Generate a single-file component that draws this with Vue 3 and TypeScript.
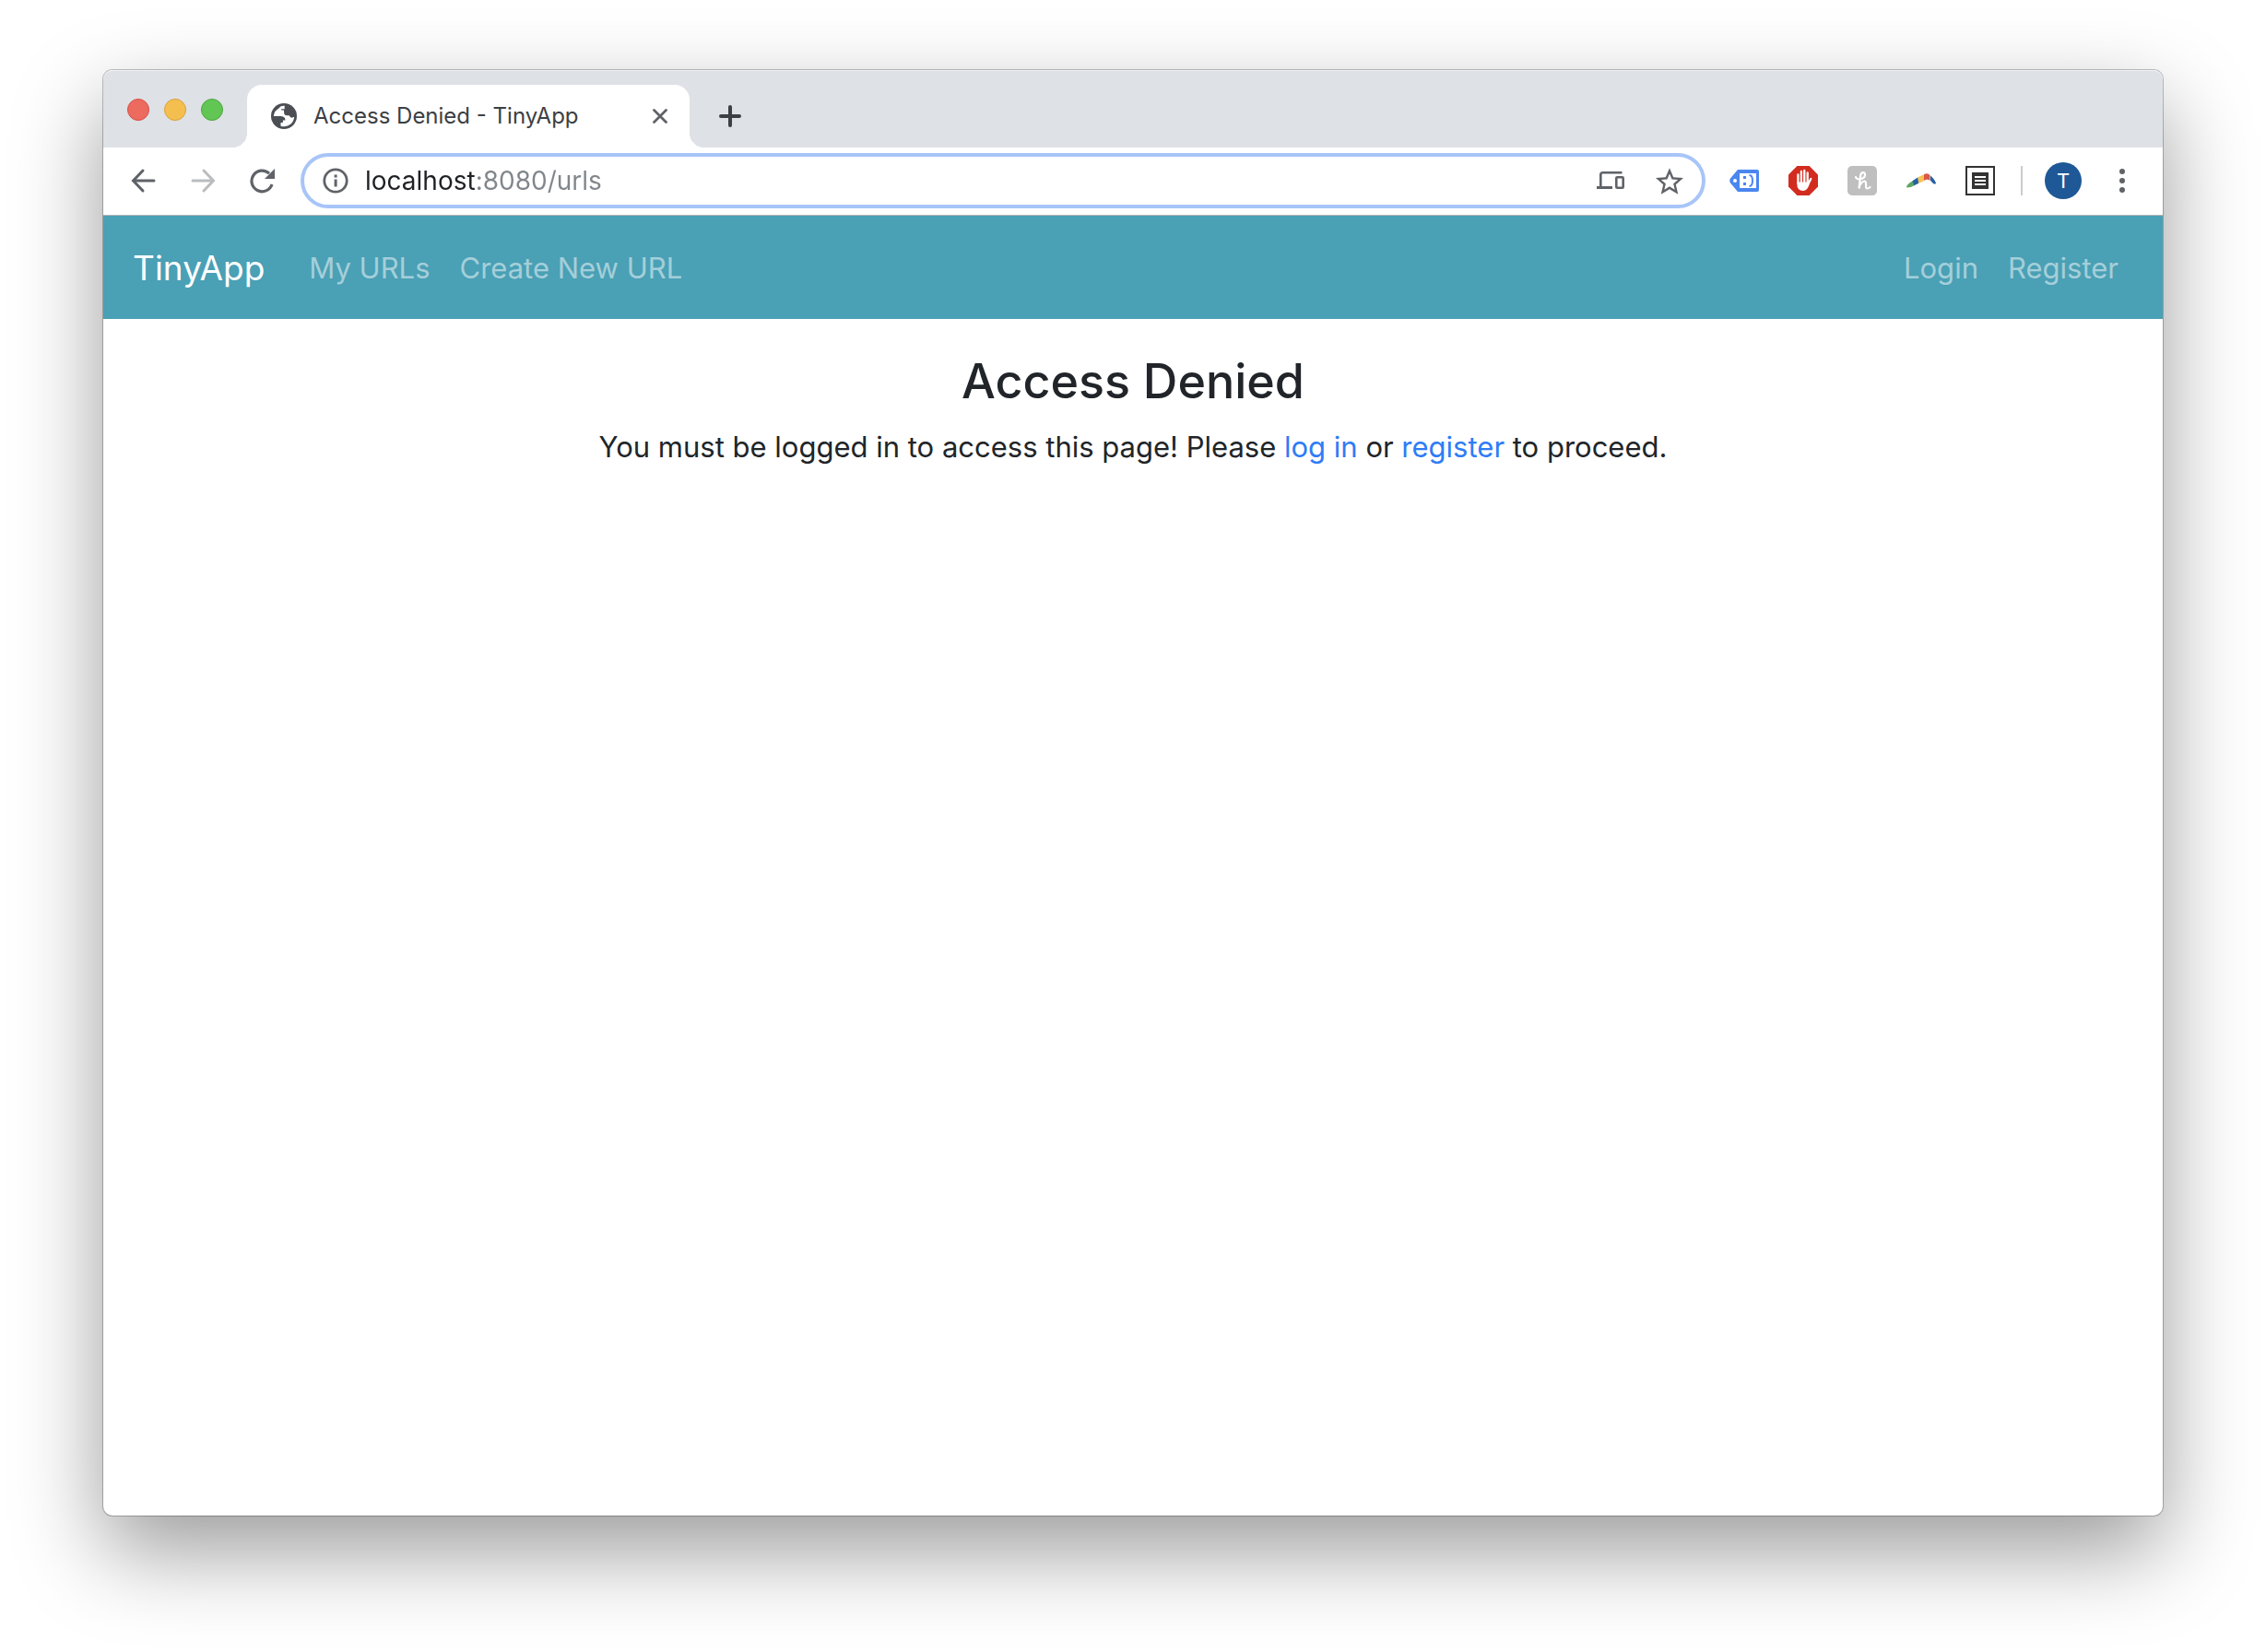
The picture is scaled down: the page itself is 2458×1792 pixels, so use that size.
<script setup lang="ts">
import { ref } from 'vue'

interface NavLink {
  label: string
  href: string
}

const address = ref('localhost:8080/urls')

const mainLinks: NavLink[] = [
  { label: 'My URLs', href: '#urls' },
  { label: 'Create New URL', href: '#new' },
]

const accountLinks: NavLink[] = [
  { label: 'Login', href: '#login' },
  { label: 'Register', href: '#register' },
]
</script>

<template>
  <div class="desktop">
    <div class="window">
      <div class="tab-strip">
        <div class="lights">
          <button class="light red" aria-label="Close window"></button>
          <button class="light yellow" aria-label="Minimize window"></button>
          <button class="light green" aria-label="Zoom window"></button>
        </div>
        <div class="tab">
          <svg width="28" height="28" viewBox="2 2 20 20" aria-hidden="true">
            <circle cx="12" cy="12" r="10" fill="#4b4f54" />
            <path
              d="M12 4c-1 0-2.100.2-3 .6v.4l-3.600 3A8 8 0 0 0 4 12h5.200c2.200 0 3.800 1 3.800 2.600v.6h-1.800v1.800H9.500v2.600A8 8 0 0 0 20 12.600c-1 .6-2.200.8-3 .2l-1-1.300h-1.700c-1.400 0-2.200-.8-2.200-2.200l-.2-1.900H10V6.500h2.500V4z"
              fill="#fff"
            />
          </svg>
          <span class="tab-title">Access Denied - TinyApp</span>
          <button class="tab-close" aria-label="Close tab">
            <svg width="16" height="16" viewBox="0 0 16 16">
              <path d="M1.500 1.500l13 13M14.500 1.500l-13 13" stroke="#5f6368" stroke-width="2.800" stroke-linecap="round" />
            </svg>
          </button>
        </div>
        <button class="new-tab" aria-label="New tab">
          <svg width="24" height="24" viewBox="0 0 24 24">
            <path d="M12 2v20M2 12h20" stroke="#3c4043" stroke-width="4" stroke-linecap="round" />
          </svg>
        </button>
      </div>

      <div class="toolbar">
        <button class="tool" aria-label="Back">
          <svg width="28" height="28" viewBox="0 0 28 28" fill="none" stroke="#5f6368" stroke-width="3" stroke-linecap="round">
            <path d="M25 14H3M13 3L2.500 14 13 25" />
          </svg>
        </button>
        <button class="tool" aria-label="Forward" disabled>
          <svg width="28" height="28" viewBox="0 0 28 28" fill="none" stroke="#babcbe" stroke-width="3" stroke-linecap="round">
            <path d="M3 14h22M15 3l10.500 11L15 25" />
          </svg>
        </button>
        <button class="tool" aria-label="Reload">
          <svg width="28" height="28" viewBox="0 0 28 28">
            <path d="M25 18A11.300 11.300 0 1 1 22 6.200" fill="none" stroke="#5f6368" stroke-width="3.200" />
            <path d="M28 1v11H17z" fill="#5f6368" />
          </svg>
        </button>

        <div class="omnibox">
          <button class="info" aria-label="Site information">
            <svg width="28" height="28" viewBox="0 0 28 28">
              <circle cx="14" cy="14" r="12.200" fill="none" stroke="#5f6368" stroke-width="2.800" />
              <path d="M12.600 12.600h3v8h-3zM12.600 7.600h3v3h-3z" fill="#5f6368" />
            </svg>
          </button>
          <input v-model="address" class="address" type="text" aria-label="Address" spellcheck="false" />
          <button class="omni-btn" aria-label="Send to your devices">
            <svg width="30" height="20" viewBox="0 0 30 20" fill="none" stroke="#5f6368">
              <path d="M27.500 1.300H6.300a2 2 0 0 0-2 2V16" stroke-width="2.600" />
              <path d="M0 17.500h17" stroke-width="3" />
              <rect x="21.300" y="6.300" width="7.400" height="11.400" rx="1" stroke-width="2.600" />
            </svg>
          </button>
          <button class="omni-btn" aria-label="Bookmark this page">
            <svg width="30" height="29" viewBox="2 2 20 19" fill="#5f6368">
              <path
                d="M22 9.240l-7.190-.62L12 2 9.190 8.630 2 9.240l5.460 4.730L5.820 21 12 17.270 18.180 21l-1.630-7.030L22 9.240zM12 15.400l-3.760 2.270 1-4.280-3.320-2.880 4.380-.38L12 6.100l1.710 4.040 4.380.38-3.320 2.880 1 4.280L12 15.400z"
              />
            </svg>
          </button>
        </div>

        <div class="extensions">
          <button class="tool" aria-label="Tag assistant">
            <svg width="32" height="24" viewBox="0 0 32 24">
              <path d="M9 0h21q2 0 2 2v20q0 2-2 2H9L1 14.500q-1.500-2.500 0-5z" fill="#4a86f0" />
              <circle cx="6" cy="12" r="2" fill="#fff" />
              <rect x="11" y="4" width="18" height="16" fill="#fff" />
              <path d="M15 7h3v3h-3zM15 14h3v3h-3z" fill="#4a86f0" />
              <path d="M21.500 6q3.500 0 3.500 6t-3.500 6" fill="none" stroke="#4a86f0" stroke-width="2" />
            </svg>
          </button>
          <button class="tool" aria-label="Ad blocker">
            <svg width="32" height="32" viewBox="0 0 32 32">
              <path d="M9.400 0h13.200L32 9.400v13.200L22.600 32H9.400L0 22.600V9.400z" fill="#d22c20" />
              <g fill="none" stroke="#fff" stroke-width="2.300" stroke-linecap="round">
                <path d="M10.400 9.500v9M13.900 6v12M17.300 5v13M20.700 7.500V20M24.300 14l-3.300 6.500" />
              </g>
              <path d="M9.250 17.500h12.600l.6 3q-2 6.500-6.500 6.500-6.700 0-6.700-8z" fill="#fff" />
            </svg>
          </button>
          <button class="tool" aria-label="Honey">
            <svg width="32" height="32" viewBox="0 0 32 32">
              <rect width="32" height="32" rx="5" fill="#bfbfbf" />
              <path
                d="M9 12c.5 4 10 2.500 10-2.500 0-3.500-4-3-4.800.5L12.500 24.500c.5-4.500 3.500-8 6-8 3 0 .3 8 2.700 8 1.200 0 2.300-.5 3.300-1.500"
                fill="none"
                stroke="#fff"
                stroke-width="2.200"
                stroke-linecap="round"
              />
            </svg>
          </button>
          <button class="tool" aria-label="Boomerang">
            <svg width="32" height="16" viewBox="0 0 32 16">
              <path d="M0 15q0-3 7-7l2 5q-5 2.500-8 2.500z" fill="#5fa463" />
              <path d="M6.500 8.200l6-4 .8 6.600-5 2.500z" fill="#2360a5" />
              <path d="M12.500 4.200L19 1.200v7l-6 2.800z" fill="#f6c453" />
              <path d="M19 1.200q4-2.200 6.500.8V8q-3-2.500-6.500 0z" fill="#da5845" />
              <path d="M26 2.600Q31 7 32 11q-1 1-3 0L26 7.700z" fill="#2360a5" />
            </svg>
          </button>
          <button class="tool" aria-label="Reader">
            <svg width="32" height="32" viewBox="0 0 32 32">
              <rect x="1" y="1" width="30" height="30" fill="#fff" stroke="#333" stroke-width="2" />
              <rect x="7" y="7" width="18" height="18" fill="#333" />
              <path d="M10 12h12M10 16h12M10 20h12" stroke="#fff" stroke-width="2" />
            </svg>
          </button>
        </div>
        <div class="divider"></div>
        <button class="avatar" aria-label="Profile">T</button>
        <button class="tool" aria-label="Menu">
          <svg width="6" height="26" viewBox="0 0 6 26" fill="#5f6368">
            <circle cx="3" cy="3" r="3" />
            <circle cx="3" cy="13" r="3" />
            <circle cx="3" cy="23" r="3" />
          </svg>
        </button>
      </div>

      <nav class="navbar">
        <a class="brand" href="#home">TinyApp</a>
        <div class="links">
          <a v-for="link in mainLinks" :key="link.label" :href="link.href">{{ link.label }}</a>
        </div>
        <div class="links account">
          <a v-for="link in accountLinks" :key="link.label" :href="link.href">{{ link.label }}</a>
        </div>
      </nav>

      <main class="content">
        <h1>Access Denied</h1>
        <p>
          You must be logged in to access this page! Please <a href="#login">log in</a> or
          <a href="#register">register</a> to proceed.
        </p>
      </main>
    </div>
  </div>
</template>

<style>
body {
  background: #fff;
}
</style>

<style scoped>
.desktop {
  box-sizing: border-box;
  min-height: 100vh;
  padding: 76px 112px 148px;
  display: flex;
  overflow: hidden;
  font-family: Inter, 'Liberation Sans', sans-serif;
}

.window {
  flex: 1;
  display: flex;
  flex-direction: column;
  background: #fff;
  border-radius: 10px;
  box-shadow:
    0 0 0 1px rgba(0, 0, 0, 0.24),
    0 38px 96px rgba(0, 0, 0, 0.4);
}

button {
  padding: 0;
  border: 0;
  background: none;
  font: inherit;
  display: flex;
  align-items: center;
  justify-content: center;
}

svg {
  display: block;
  flex: none;
}

.tab-strip {
  height: 84px;
  display: flex;
  align-items: center;
  background: #dee1e6;
  border-radius: 10px 10px 0 0;
  box-shadow: inset 0 1px 0 #f0f1f3;
}

.lights {
  display: flex;
  gap: 16px;
  padding: 2px 26px 0;
}

.light {
  box-sizing: border-box;
  width: 24px;
  height: 24px;
  border: 1px solid;
  border-radius: 50%;
}

.red {
  background: #ec6a5e;
  border-color: #d8504a;
}

.yellow {
  background: #f5bf4f;
  border-color: #d9a13c;
}

.green {
  background: #62c655;
  border-color: #4fa73c;
}

.tab {
  position: relative;
  box-sizing: border-box;
  align-self: flex-end;
  width: 480px;
  height: 68px;
  padding: 0 24px 0 26px;
  display: flex;
  align-items: center;
  background: #fff;
  border-radius: 16px 16px 0 0;
}

.tab::before,
.tab::after {
  content: '';
  position: absolute;
  bottom: 0;
  width: 16px;
  height: 16px;
}

.tab::before {
  right: 100%;
  background: radial-gradient(circle at 0 0, transparent 16px, #fff 16px);
}

.tab::after {
  left: 100%;
  background: radial-gradient(circle at 100% 0, transparent 16px, #fff 16px);
}

.tab-title {
  flex: 1;
  margin-left: 18px;
  font-size: 24px;
  line-height: 32px;
  color: #3c4043;
}

.new-tab {
  width: 56px;
  height: 56px;
  margin: 16px 0 0 16px;
}

.toolbar {
  box-sizing: border-box;
  height: 74px;
  padding: 0 12px 1px;
  display: flex;
  align-items: center;
  border-bottom: 1px solid #b6b4b6;
}

.tool {
  width: 64px;
  height: 56px;
}

.omnibox {
  flex: 1;
  box-sizing: border-box;
  height: 60px;
  margin: 0 10px;
  padding: 0 20px;
  display: flex;
  align-items: center;
  border: 4px solid #a8c5f8;
  border-radius: 30px;
}

.address {
  flex: 1;
  min-width: 0;
  margin-left: 18px;
  padding: 0;
  border: 0;
  outline: 0;
  font: inherit;
  font-size: 28px;
  line-height: 40px;
  color: transparent;
  background: linear-gradient(to right, #202124 120px, #80868b 120px);
  background-clip: text;
}

.omni-btn {
  margin-left: 34px;
}

.extensions {
  display: flex;
}

.divider {
  width: 2px;
  height: 32px;
  margin: 0 24px 0 12px;
  background: #ccc;
}

.avatar {
  width: 40px;
  height: 40px;
  margin-right: 12px;
  border-radius: 50%;
  background: #1f5896;
  color: #fff;
  font-size: 22px;
}

.navbar {
  box-sizing: border-box;
  height: 112px;
  padding: 2px 32px 0;
  display: flex;
  align-items: center;
  background: #4aa0b5;
}

.navbar a {
  text-decoration: none;
}

.brand {
  margin-right: 32px;
  font-size: 37px;
  line-height: 60px;
  color: #fff;
}

.links {
  display: flex;
}

.links a {
  padding: 0 16px;
  font-size: 31px;
  line-height: 48px;
  color: rgba(255, 255, 255, 0.5);
}

.account {
  margin-left: auto;
}

.content {
  padding: 34px 32px;
  text-align: center;
  color: #212529;
}

h1 {
  margin: 0 0 14px;
  font-size: 52px;
  line-height: 67px;
  font-weight: 500;
}

p {
  margin: 0;
  font-size: 31px;
  line-height: 48px;
}

p a {
  color: #2f7cf6;
  text-decoration: none;
}
</style>
